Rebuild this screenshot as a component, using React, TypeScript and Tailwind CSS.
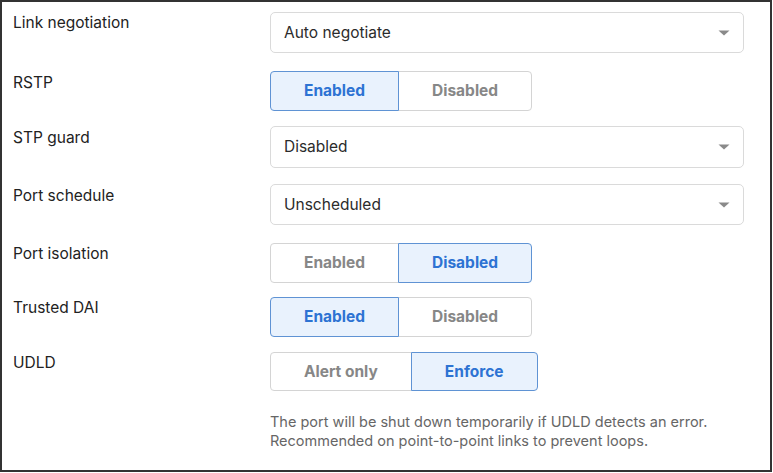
import React from 'react'

type Row =
  | { label: string; kind: 'select'; value: string; mt: number; h: number; lp: number }
  | { label: string; kind: 'toggle'; options: string[]; active: number; mt: number; h: number; lp: number }

const rows: Row[] = [
  { label: 'Link negotiation', kind: 'select', value: 'Auto negotiate', mt: 10, h: 41, lp: 1 },
  { label: 'RSTP', kind: 'toggle', options: ['Enabled', 'Disabled'], active: 0, mt: 18, h: 40, lp: 2 },
  { label: 'STP guard', kind: 'select', value: 'Disabled', mt: 15, h: 42, lp: 2 },
  { label: 'Port schedule', kind: 'select', value: 'Unscheduled', mt: 16, h: 41, lp: 2 },
  { label: 'Port isolation', kind: 'toggle', options: ['Enabled', 'Disabled'], active: 1, mt: 18, h: 40, lp: 1 },
  { label: 'Trusted DAI', kind: 'toggle', options: ['Enabled', 'Disabled'], active: 0, mt: 14, h: 40, lp: 1 },
  { label: 'UDLD', kind: 'toggle', options: ['Alert only', 'Enforce'], active: 1, mt: 15, h: 39, lp: 1 },
]

const Select = ({ value, h }: { value: string; h: number }) => (
  <div
    className="flex w-[474px] items-center justify-between rounded-[5px] border border-[#dadada] bg-white pl-[13px] pr-[13px] text-[15.5px] text-[#2b2b2b]"
    style={{ height: h }}
  >
    <span>{value}</span>
    <svg width="12" height="6" viewBox="0 0 12 6">
      <path d="M0.5 0.5 L11.5 0.5 L6 5.5 Z" fill="#8a8a8a" />
    </svg>
  </div>
)

const Toggle = ({ options, active, h }: { options: string[]; active: number; h: number }) => (
  <div className="flex">
    {options.map((opt, i) => {
      const on = i === active
      return (
        <div
          key={opt}
          className={
            'flex items-center justify-center border px-[33px] text-[15.5px] font-bold ' +
            (i > 0 ? '-ml-px ' : '') +
            (i === 0 ? 'rounded-l-[4px] ' : 'rounded-r-[4px] ') +
            (on
              ? 'relative z-10 border-[#5f93d4] bg-[#e9f2fd] text-[#2d73d3]'
              : 'border-[#d4d4d4] bg-white text-[#878787]')
          }
          style={{ height: h }}
        >
          {opt}
        </div>
      )
    })}
  </div>
)

export default function App() {
  return (
    <div className="h-[472px] w-[772px] border-2 border-[#333] bg-white font-['Inter','Liberation_Sans',sans-serif]">
      <div className="flex flex-col pl-[11px]">
        {rows.map((r) => (
          <div key={r.label} className="flex items-start" style={{ marginTop: r.mt }}>
            <div className="w-[257px] text-[15.5px] leading-5 text-[#222]" style={{ paddingTop: r.lp }}>
              {r.label}
            </div>
            {r.kind === 'select' ? (
              <Select value={r.value} h={r.h} />
            ) : (
              <Toggle options={r.options} active={r.active} h={r.h} />
            )}
          </div>
        ))}
        <div className="ml-[257px] mt-[21px] text-[14.5px] leading-[19px] text-[#666]">
          <p>The port will be shut down temporarily if UDLD detects an error.</p>
          <p>Recommended on point-to-point links to prevent loops.</p>
        </div>
      </div>
    </div>
  )
}
